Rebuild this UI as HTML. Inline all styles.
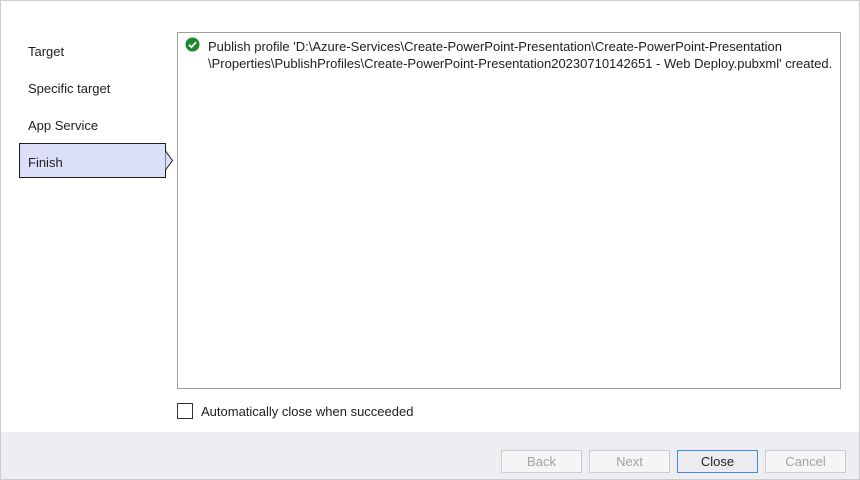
<!DOCTYPE html>
<html><head><style>
body{margin:0;width:860px;height:480px;position:relative;background:#fff;font-family:"Liberation Sans",sans-serif;font-size:13px;color:#1e1e1e;overflow:hidden}
.frame{position:absolute;left:0;top:0;width:858px;height:478px;border:1px solid #ccc}
.nav{position:absolute;left:28px}
.sel{position:absolute;left:19px;top:143px;width:147px;height:35px;background:#dcdff8;border:1px solid #1e1e1e;box-sizing:border-box}
.box{position:absolute;left:177px;top:32px;width:664px;height:357px;border:1px solid #a0a0a0;box-sizing:border-box}
.msg{position:absolute;left:208px;top:38px;line-height:17px;width:630px}
.foot{position:absolute;left:1px;top:432px;width:858px;height:47px;background:#eeeef2}
.btn{position:absolute;top:450px;width:81px;height:23px;box-sizing:border-box;border:1px solid #ccced6;background:#f5f5f5;color:#a2a2a2;text-align:center;line-height:21px}
</style></head><body>
<div class="frame"></div>
<div class="nav" style="top:44px">Target</div>
<div class="nav" style="top:81px">Specific target</div>
<div class="nav" style="top:118px">App Service</div>
<div class="sel"></div>
<svg style="position:absolute;left:165px;top:151px" width="9" height="20"><path d="M0.5 0 L7.5 9.5 L0.5 19" fill="#dcdff8" stroke="#1e1e1e"/></svg>
<div class="nav" style="top:155px">Finish</div>
<div class="box"></div>
<svg style="position:absolute;left:185px;top:37px" width="15" height="15"><circle cx="7.5" cy="7.5" r="7" fill="#1f8a2d"/><path d="M4 7.8 L6.5 10.2 L11 5.2" stroke="#fff" stroke-width="1.8" fill="none"/></svg>
<div class="msg">Publish profile 'D:\Azure-Services\Create-PowerPoint-Presentation\Create-PowerPoint-Presentation<br>\Properties\PublishProfiles\Create-PowerPoint-Presentation20230710142651 - Web Deploy.pubxml' created.</div>
<div style="position:absolute;left:177px;top:403px;width:16px;height:16px;border:1px solid #333;box-sizing:border-box"></div>
<div style="position:absolute;left:201px;top:404px">Automatically close when succeeded</div>
<div class="foot"></div>
<div class="btn" style="left:501px">Back</div>
<div class="btn" style="left:589px">Next</div>
<div class="btn" style="left:677px;border-color:#3d8ee8;background:#ececf0;color:#1e1e1e">Close</div>
<div class="btn" style="left:765px">Cancel</div>
</body></html>
